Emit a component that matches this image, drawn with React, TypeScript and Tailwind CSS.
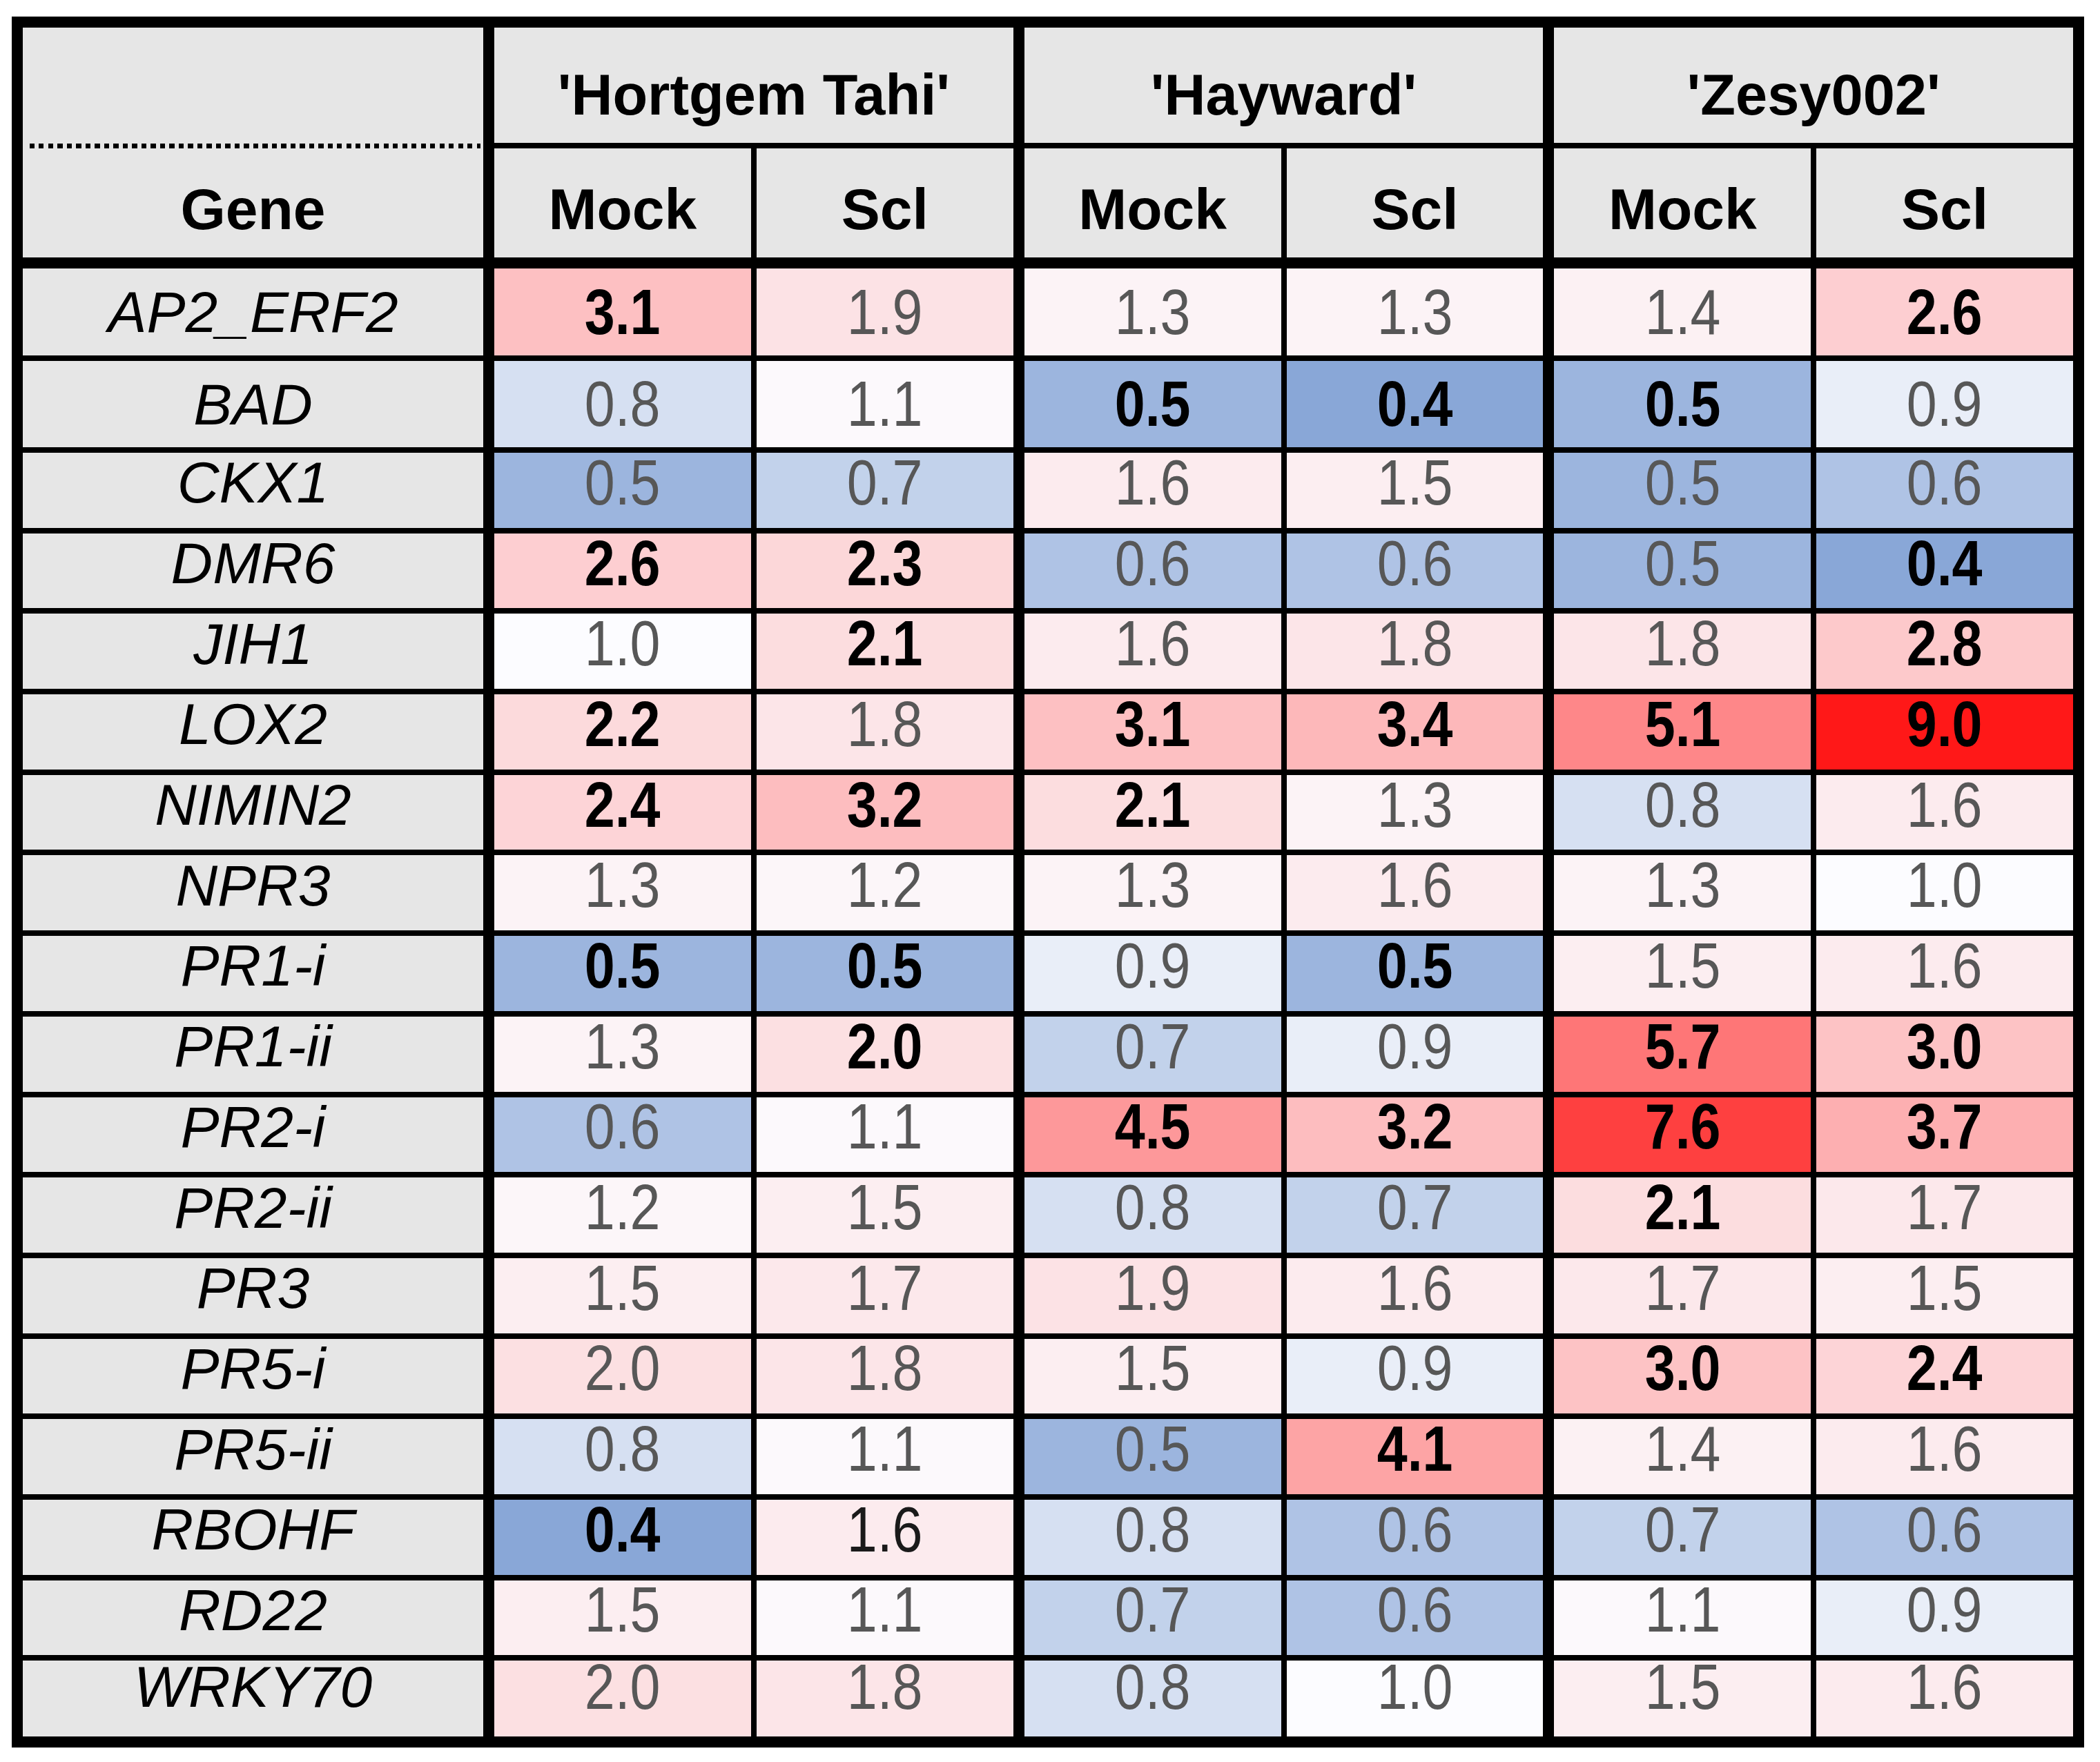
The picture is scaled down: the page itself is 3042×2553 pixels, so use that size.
import React from "react";

const GROUPS = ["'Hortgem Tahi'", "'Hayward'", "'Zesy002'"];

// "*" marks a value printed in bold, "!" a plain value printed in black
const ROWS: { gene: string; v: string[] }[] = [
  { gene: "AP2_ERF2", v: ["3.1*", "1.9", "1.3", "1.3", "1.4", "2.6*"] },
  { gene: "BAD", v: ["0.8", "1.1", "0.5*", "0.4*", "0.5*", "0.9"] },
  { gene: "CKX1", v: ["0.5", "0.7", "1.6", "1.5", "0.5", "0.6"] },
  { gene: "DMR6", v: ["2.6*", "2.3*", "0.6", "0.6", "0.5", "0.4*"] },
  { gene: "JIH1", v: ["1.0", "2.1*", "1.6", "1.8", "1.8", "2.8*"] },
  { gene: "LOX2", v: ["2.2*", "1.8", "3.1*", "3.4*", "5.1*", "9.0*"] },
  { gene: "NIMIN2", v: ["2.4*", "3.2*", "2.1*", "1.3", "0.8", "1.6"] },
  { gene: "NPR3", v: ["1.3", "1.2", "1.3", "1.6", "1.3", "1.0"] },
  { gene: "PR1-i", v: ["0.5*", "0.5*", "0.9", "0.5*", "1.5", "1.6"] },
  { gene: "PR1-ii", v: ["1.3", "2.0*", "0.7", "0.9", "5.7*", "3.0*"] },
  { gene: "PR2-i", v: ["0.6", "1.1", "4.5*", "3.2*", "7.6*", "3.7*"] },
  { gene: "PR2-ii", v: ["1.2", "1.5", "0.8", "0.7", "2.1*", "1.7"] },
  { gene: "PR3", v: ["1.5", "1.7", "1.9", "1.6", "1.7", "1.5"] },
  { gene: "PR5-i", v: ["2.0", "1.8", "1.5", "0.9", "3.0*", "2.4*"] },
  { gene: "PR5-ii", v: ["0.8", "1.1", "0.5", "4.1*", "1.4", "1.6"] },
  { gene: "RBOHF", v: ["0.4*", "1.6!", "0.8", "0.6", "0.7", "0.6"] },
  { gene: "RD22", v: ["1.5", "1.1", "0.7", "0.6", "1.1", "0.9"] },
  { gene: "WRKY70", v: ["2.0", "1.8", "0.8", "1.0", "1.5", "1.6"] },
];

const WHITE = [252, 252, 255];
const RED = [255, 24, 24];
const BLUE = [92, 134, 200];

function mix(a: number[], b: number[], t: number) {
  const c = a.map((x, i) => Math.round(x + (b[i] - x) * t));
  return `rgb(${c[0]}, ${c[1]}, ${c[2]})`;
}

// fold change -> heat map colour, white at 1.0
function heat(v: number) {
  if (v >= 1) return mix(WHITE, RED, Math.min(1, (v - 1) / 8));
  return mix(WHITE, BLUE, Math.min(1, (1 - v) * 1.2));
}

function rowClass(i: number) {
  if (i === 0) return "h-[126px]";
  if (i === 1) return "h-[125px]";
  if (i === ROWS.length - 1) return "h-[110px] pb-[34px]";
  return "h-[108.7px] pb-[22px]";
}

const FONT = "font-['Liberation_Sans',Arial,sans-serif]";

function ValueCell({ raw, size }: { raw: string; size: string }) {
  const bold = raw.endsWith("*");
  const dark = raw.endsWith("!");
  const text = raw.replace(/[*!]$/, "");
  return (
    <div
      className={`flex flex-1 items-center justify-center ${size}`}
      style={{ backgroundColor: heat(parseFloat(text)) }}
    >
      <span
        className={`inline-block scale-x-[0.85] text-[93px] leading-none ${
          bold ? "font-bold text-black" : dark ? "text-[#1a1a1a]" : "text-[#575757]"
        }`}
      >
        {text}
      </span>
    </div>
  );
}

export default function App() {
  return (
    <div className={`min-h-screen bg-white pl-[17px] pt-[24px] ${FONT}`}>
      <div className="flex w-[3002px] flex-col gap-[16px] bg-black p-[16px]">
        {/* header */}
        <div className="flex gap-[16px]">
          <div className="flex w-[667px] shrink-0 flex-col bg-[#e6e6e6]">
            <div className="h-[167px]" />
            <div className="flex h-[8px] items-center pl-[10px] pr-[4px]">
              <div className="h-[7px] w-full bg-[image:repeating-linear-gradient(90deg,#000_0px,#000_7px,transparent_7px,transparent_13.5px)]" />
            </div>
            <div className="flex h-[158px] items-center justify-center pt-[18px] text-[84px] font-bold leading-none text-black">
              Gene
            </div>
          </div>
          {GROUPS.map((g) => (
            <div key={g} className="flex flex-1 flex-col gap-[8px]">
              <div className="flex h-[167px] items-center justify-center bg-[#e6e6e6] pt-[28px] text-[83px] font-bold leading-none text-black">
                {g}
              </div>
              <div className="flex gap-[8px]">
                {["Mock", "Scl"].map((s) => (
                  <div
                    key={s}
                    className="flex h-[158px] flex-1 items-center justify-center bg-[#e6e6e6] pt-[18px] text-[84px] font-bold leading-none text-black"
                  >
                    {s}
                  </div>
                ))}
              </div>
            </div>
          ))}
        </div>

        {/* body */}
        <div className="flex flex-col gap-[8px]">
          {ROWS.map((r, i) => (
            <div key={r.gene} className="flex gap-[16px]">
              <div
                className={`flex w-[667px] shrink-0 items-center justify-center bg-[#e6e6e6] text-[84px] italic leading-none text-black ${rowClass(i)}`}
              >
                {r.gene}
              </div>
              {[0, 1, 2].map((g) => (
                <div key={g} className="flex flex-1 gap-[8px]">
                  <ValueCell raw={r.v[g * 2]} size={rowClass(i)} />
                  <ValueCell raw={r.v[g * 2 + 1]} size={rowClass(i)} />
                </div>
              ))}
            </div>
          ))}
        </div>
      </div>
    </div>
  );
}
